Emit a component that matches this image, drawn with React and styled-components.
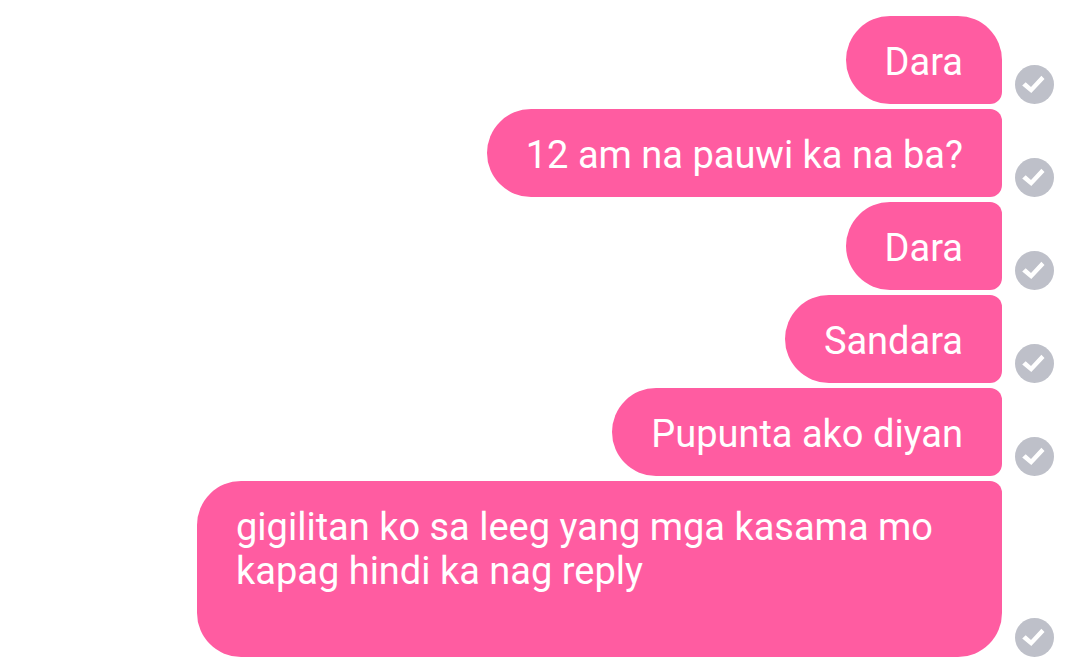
import styled, { createGlobalStyle } from "styled-components";

const GlobalStyle = createGlobalStyle`
    * {
        box-sizing: border-box;
    }
    body {
        margin: 0;
        background: #ffffff;
        font-family: Roboto, "Liberation Sans", sans-serif;
    }
`

const Chat = styled.main`
    padding: 16px 21px 15px;
`

const MessageList = styled.ul`
    display: flex;
    flex-direction: column;
    gap: 5px;
    margin: 0;
    padding: 0;
    list-style: none;
`

const MessageRow = styled.li`
    display: flex;
    justify-content: flex-end;
    align-items: flex-end;
    gap: 13px;
`

const Bubble = styled.p`
    max-width: 805px;
    margin: 0;
    padding: 24px 39px 20px;
    border-radius: ${({ $position }) => {
        if ($position === "first") return "44px 44px 12px 44px";
        if ($position === "last") return "44px 12px 44px 44px";
        return "44px 12px 12px 44px";
    }};
    background: #ff5ca1;
    color: #ffffff;
    font-size: 38px;
    line-height: 44px;
    white-space: pre-wrap;
`

const StatusIcon = styled.svg`
    flex: none;
    width: 39px;
    height: 39px;
`

const messages = [
    "Dara",
    "12 am na pauwi ka na ba?",
    "Dara",
    "Sandara",
    "Pupunta ako diyan",
    // sent with an empty line at the end
    "gigilitan ko sa leeg yang mga kasama mo kapag hindi ka nag reply\n\n",
];

const Sent = () => (
    <StatusIcon viewBox="0 0 39 39" role="img" aria-label="Sent">
        <circle cx="19.5" cy="19.5" r="19.5" fill="#bec0c9" />
        <path d="M7.2 20.6 10.7 17.2 16 22.1 26.4 10.8 29.5 14 16.3 28Z" fill="#ffffff" />
    </StatusIcon>
);

const getPosition = (index) => {
    if (index === 0) return "first";
    if (index === messages.length - 1) return "last";
    return "middle";
};

const App = () => {
    return (
        <>
            <GlobalStyle />
            <Chat>
                <MessageList>
                    {messages.map((text, index) => (
                        <MessageRow key={index}>
                            <Bubble $position={getPosition(index)}>{text}</Bubble>
                            <Sent />
                        </MessageRow>
                    ))}
                </MessageList>
            </Chat>
        </>
    );
};

export default App;
